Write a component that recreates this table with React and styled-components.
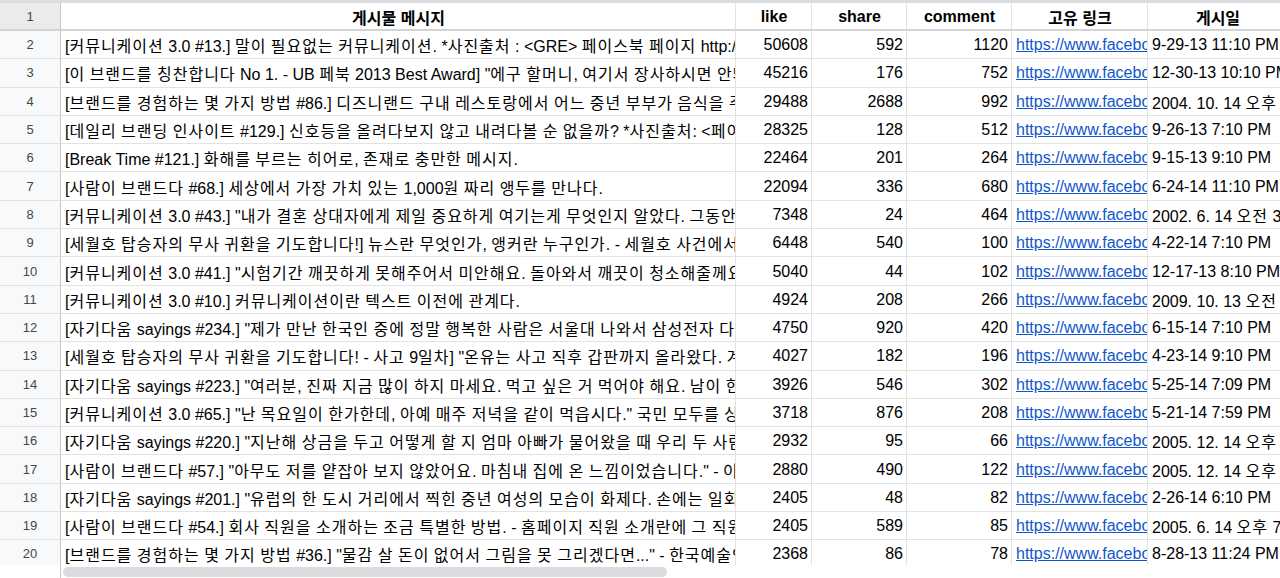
import styled, { createGlobalStyle } from 'styled-components'

const GlobalStyle = createGlobalStyle`
	html, body {
		margin: 0;
		padding: 0;
		background: #ffffff;
		overflow: hidden;
	}
	body {
		font-family: 'Liberation Sans', Arial, 'Noto Sans CJK KR', sans-serif;
	}
`

const columns = '61px 675px 76px 95px 105px 136px 140px'

const Page = styled.div`
	width: 1280px;
	height: 578px;
	display: flex;
	flex-direction: column;
	overflow: hidden;
	background: #ffffff;
`

const TopEdge = styled.div`
	height: 3px;
	flex: none;
	background: #dadce0;
`

const Sheet = styled.div`
	flex: none;
	height: 562px;
	overflow: hidden;
	display: grid;
	grid-template-columns: ${columns};
	grid-template-rows: 28px;
	grid-auto-rows: 28.3px;
`

const RowHead = styled.div`
	box-sizing: border-box;
	display: flex;
	align-items: center;
	justify-content: center;
	background: ${(props) => (props.$top ? '#ebebeb' : '#f8f9fa')};
	border-right: 1px solid #c4c7c5;
	border-bottom: ${(props) => (props.$top ? '2px solid #d3d3d3' : '1px solid #e1e1e1')};
	font-size: 13px;
	color: #444746;
`

const Cell = styled.div`
	box-sizing: border-box;
	display: flex;
	align-items: center;
	justify-content: ${(props) =>
		props.$align === 'right' ? 'flex-end' : props.$align === 'center' ? 'center' : 'flex-start'};
	padding: ${(props) => (props.$top ? '2px 3px 0 4px' : '1px 3px 0 4px')};
	border-right: 1px solid #e2e2e2;
	border-bottom: ${(props) => (props.$top ? '2px solid #d3d3d3' : '1px solid #e2e2e2')};
	overflow: hidden;
	white-space: nowrap;
	font-size: 16px;
	font-weight: ${(props) => (props.$bold ? 700 : 400)};
	color: #000000;
`

const CellText = styled.span`
	white-space: pre;
`

const Hangul = styled.span`
	letter-spacing: 1px;
`

const Link = styled.span`
	color: #1155cc;
	text-decoration: underline;
`

const ScrollTrack = styled.div`
	flex: 1;
	display: grid;
	grid-template-columns: 61px 1fr;
`

const TrackGutter = styled.div`
	border-right: 1px solid #c4c7c5;
`

const TrackArea = styled.div`
	display: flex;
	align-items: center;
	padding-left: 2px;
`

const Thumb = styled.div`
	width: 604px;
	height: 10px;
	border-radius: 6px;
	background: #dadce0;
`

const rows = [
	['[커뮤니케이션 3.0 #13.] 말이 필요없는 커뮤니케이션. *사진출처 : <GRE> 페이스북 페이지 http://www.facebook.com/gre', 50608, 592, 1120, '9-29-13 11:10 PM'],
	['[이 브랜드를 칭찬합니다 No 1. - UB 페북 2013 Best Award] "에구 할머니, 여기서 장사하시면 안돼요"', 45216, 176, 752, '12-30-13 10:10 PM'],
	['[브랜드를 경험하는 몇 가지 방법 #86.] 디즈니랜드 구내 레스토랑에서 어느 중년 부부가 음식을 주문했다', 29488, 2688, 992, '2004. 10. 14 오후 7:10'],
	['[데일리 브랜딩 인사이트 #129.] 신호등을 올려다보지 않고 내려다볼 순 없을까? *사진출처: <페이스북>', 28325, 128, 512, '9-26-13 7:10 PM'],
	['[Break Time #121.] 화해를 부르는 히어로, 존재로 충만한 메시지.', 22464, 201, 264, '9-15-13 9:10 PM'],
	['[사람이 브랜드다 #68.] 세상에서 가장 가치 있는 1,000원 짜리 앵두를 만나다.', 22094, 336, 680, '6-24-14 11:10 PM'],
	['[커뮤니케이션 3.0 #43.] "내가 결혼 상대자에게 제일 중요하게 여기는게 무엇인지 알았다. 그동안 나는', 7348, 24, 464, '2002. 6. 14 오전 3:10'],
	['[세월호 탑승자의 무사 귀환을 기도합니다!] 뉴스란 무엇인가, 앵커란 누구인가. - 세월호 사건에서 보여준', 6448, 540, 100, '4-22-14 7:10 PM'],
	['[커뮤니케이션 3.0 #41.] "시험기간 깨끗하게 못해주어서 미안해요. 돌아와서 깨끗이 청소해줄께요"', 5040, 44, 102, '12-17-13 8:10 PM'],
	['[커뮤니케이션 3.0 #10.] 커뮤니케이션이란 텍스트 이전에 관계다.', 4924, 208, 266, '2009. 10. 13 오전 10:10'],
	['[자기다움 sayings #234.] "제가 만난 한국인 중에 정말 행복한 사람은 서울대 나와서 삼성전자 다니는', 4750, 920, 420, '6-15-14 7:10 PM'],
	['[세월호 탑승자의 무사 귀환을 기도합니다! - 사고 9일차] "온유는 사고 직후 갑판까지 올라왔다. 계속', 4027, 182, 196, '4-23-14 9:10 PM'],
	['[자기다움 sayings #223.] "여러분, 진짜 지금 많이 하지 마세요. 먹고 싶은 거 먹어야 해요. 남이 한다고', 3926, 546, 302, '5-25-14 7:09 PM'],
	['[커뮤니케이션 3.0 #65.] "난 목요일이 한가한데, 아예 매주 저녁을 같이 먹읍시다." 국민 모두를 상대로', 3718, 876, 208, '5-21-14 7:59 PM'],
	['[자기다움 sayings #220.] "지난해 상금을 두고 어떻게 할 지 엄마 아빠가 물어왔을 때 우리 두 사람은', 2932, 95, 66, '2005. 12. 14 오후 1:10'],
	['[사람이 브랜드다 #57.] "아무도 저를 얕잡아 보지 않았어요. 마침내 집에 온 느낌이었습니다." - 이제', 2880, 490, 122, '2005. 12. 14 오후 1:10'],
	['[자기다움 sayings #201.] "유럽의 한 도시 거리에서 찍힌 중년 여성의 모습이 화제다. 손에는 일회용', 2405, 48, 82, '2-26-14 6:10 PM'],
	['[사람이 브랜드다 #54.] 회사 직원을 소개하는 조금 특별한 방법. - 홈페이지 직원 소개란에 그 직원의', 2405, 589, 85, '2005. 6. 14 오후 7:10'],
	['[브랜드를 경험하는 몇 가지 방법 #36.] "물감 살 돈이 없어서 그림을 못 그리겠다면..." - 한국예술인복지재단', 2368, 86, 78, '8-28-13 11:24 PM'],
]

const headers = ['게시물 메시지', 'like', 'share', 'comment', '고유 링크', '게시일']

// hangul runs get a touch of extra tracking to match the wider korean face in the sheet
const withHangul = (text) =>
	text.split(/([\u3131-\ud7a3]+)/).map((part, i) =>
		/[\u3131-\ud7a3]/.test(part) ? <Hangul key={i}>{part}</Hangul> : part
	)

export default function App() {
	return (
		<Page>
			<GlobalStyle />
			<TopEdge />
			<Sheet>
				<RowHead $top>1</RowHead>
				{headers.map((h) => (
					<Cell key={h} $top $bold $align='center'>
						{h}
					</Cell>
				))}
				{rows.map((r, i) => (
					<Row key={i} index={i + 2} data={r} />
				))}
			</Sheet>
			<ScrollTrack>
				<TrackGutter />
				<TrackArea>
					<Thumb />
				</TrackArea>
			</ScrollTrack>
		</Page>
	)
}

const Row = ({ index, data }) => {
	const [message, like, share, comment, date] = data
	return (
		<>
			<RowHead>{index}</RowHead>
			<Cell>
				<CellText>{withHangul(message)}</CellText>
			</Cell>
			<Cell $align='right'>{like}</Cell>
			<Cell $align='right'>{share}</Cell>
			<Cell $align='right'>{comment}</Cell>
			<Cell>
				<Link>https://www.facebook.com/</Link>
			</Cell>
			<Cell>
				<CellText>{withHangul(date)}</CellText>
			</Cell>
		</>
	)
}
